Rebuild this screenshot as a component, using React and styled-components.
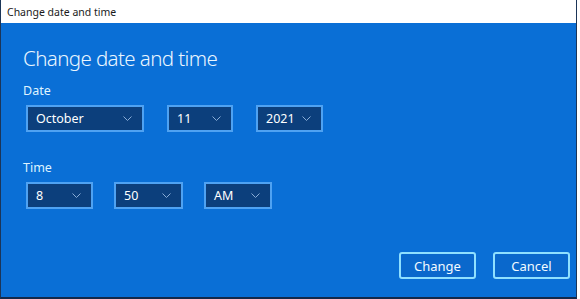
import styled, { createGlobalStyle } from "styled-components";

const Global = createGlobalStyle`
  html, body { margin: 0; padding: 0; background: #ffffff; }
  body { font-family: "Noto Sans", "Open Sans", sans-serif; }
`;

export default function App() {
  return (
    <>
      <Global />
      <Window>
        <TitleBar>Change date and time</TitleBar>
        <Content>
          <Heading>Change date and time</Heading>
          <Label>Date</Label>
          <Row gap={23}>
            <Select width={118} value="October" />
            <Select width={66} value="11" />
            <Select width={67} value="2021" />
          </Row>
          <Label top={28}>Time</Label>
          <Row gap={21}>
            <Select width={67} value="8" />
            <Select width={69} value="50" />
            <Select width={68} value="AM" />
          </Row>
          <Footer>
            <Button>Change</Button>
            <Button>Cancel</Button>
          </Footer>
        </Content>
      </Window>
    </>
  );
}

function Select({ width, value }) {
  return (
    <Box width={width}>
      <span>{value}</span>
      <Chevron />
    </Box>
  );
}

function Chevron() {
  return (
    <svg width="9" height="5" viewBox="0 0 9 5">
      <path d="M0.5 0.5 L4.5 4.5 L8.5 0.5" fill="none" stroke="#89acd6" strokeWidth="1" />
    </svg>
  );
}

const Window = styled.div`
  width: 577px;
  height: 299px;
  display: flex;
  flex-direction: column;
  border-left: 1px solid #1b3558;
  border-right: 1px solid #1b3558;
  border-bottom: 2px solid #13294a;
  box-sizing: border-box;
`;

const TitleBar = styled.div`
  height: 23px;
  background: #ffffff;
  display: flex;
  align-items: center;
  padding-left: 6px;
  font-size: 10.5px;
  color: #1a1a1a;
`;

const Content = styled.div`
  flex: 1;
  background: #0a6fd6;
  display: flex;
  flex-direction: column;
  padding: 20px 0 0 22px;
  color: #ffffff;
`;

const Heading = styled.h1`
  margin: 0;
  font-size: 20.5px;
  font-weight: 300;
  line-height: 30px;
  color: #eaf6ff;
  letter-spacing: -0.6px;
`;

const Label = styled.div`
  margin-top: ${(p) => p.top || 10}px;
  font-size: 12.5px;
  line-height: 16px;
  color: #dff3ff;
`;

const Row = styled.div`
  display: flex;
  gap: ${(p) => p.gap}px;
  margin-top: 6px;
  padding-left: 3px;
`;

const Box = styled.div`
  width: ${(p) => p.width}px;
  height: 27px;
  box-sizing: border-box;
  border: 2px solid #4fa2f2;
  background: #0c3f7c;
  display: flex;
  align-items: center;
  justify-content: space-between;
  padding: 0 10px 0 8px;
  font-size: 12.5px;
  color: #ffffff;
`;

const Footer = styled.div`
  margin-top: auto;
  margin-bottom: 18px;
  margin-right: 6px;
  display: flex;
  justify-content: flex-end;
  gap: 17px;
`;

const Button = styled.div`
  width: 77px;
  height: 27px;
  box-sizing: border-box;
  border: 2px solid #8fe0ff;
  border-radius: 3px;
  background: #0a68cc;
  display: flex;
  align-items: center;
  justify-content: center;
  font-size: 13px;
  color: #f2fbff;
`;
